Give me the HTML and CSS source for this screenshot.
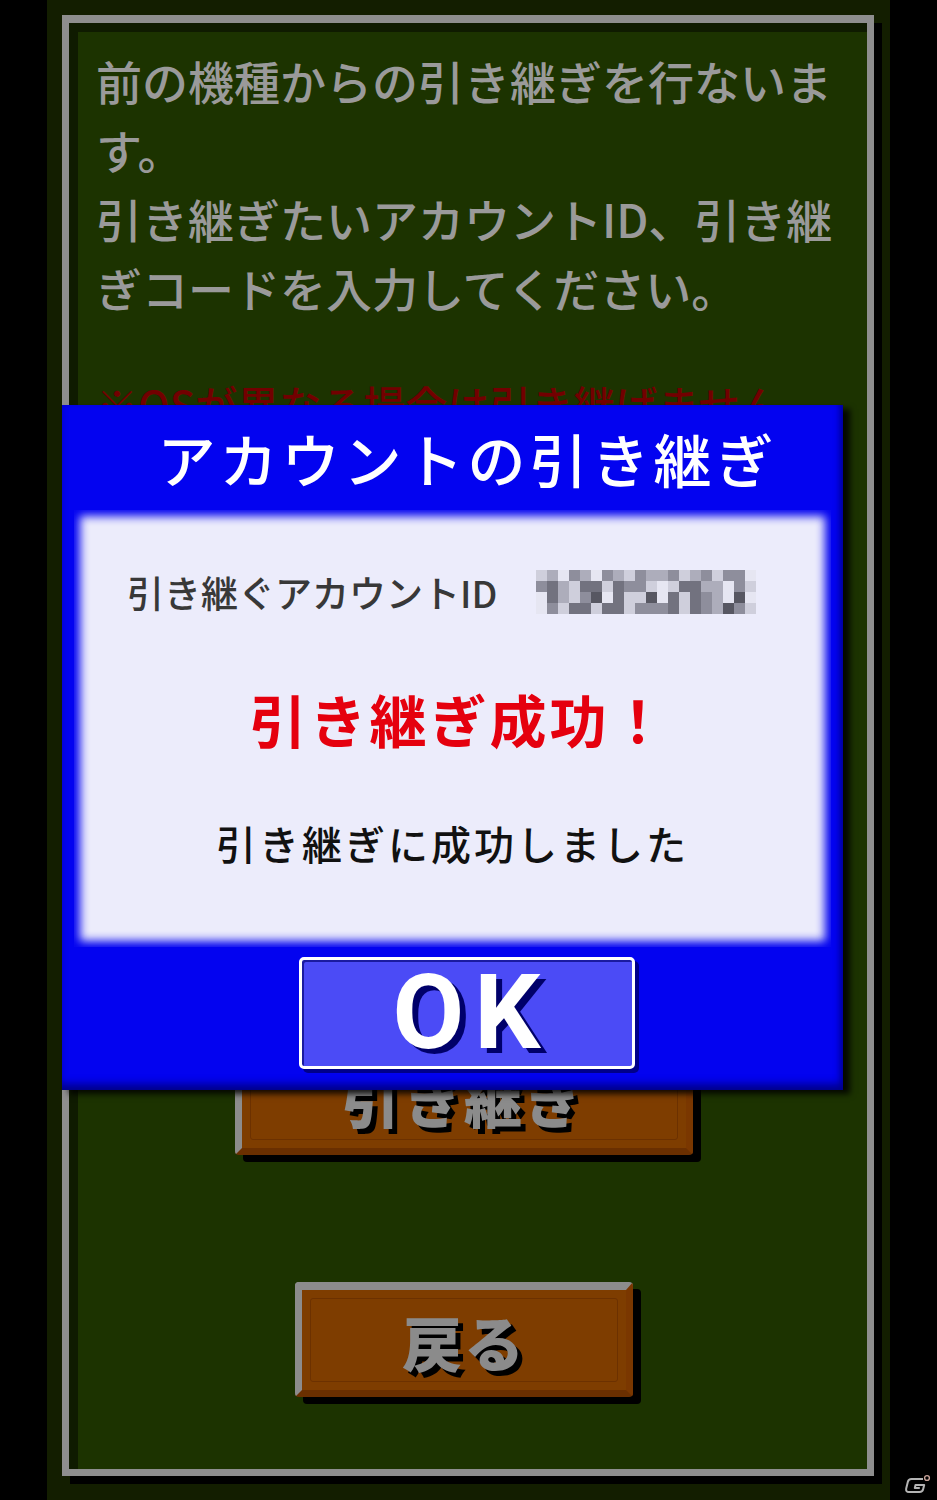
FILE: index.html
```html
<!DOCTYPE html>
<html lang="ja">
  <head>
    <meta charset="utf-8">
    <title>アカウントの引き継ぎ</title>
    <link rel="stylesheet" href="styles.css">
  </head>
  <body>
    <div class="screen">
      <div class="frame">
        <p class="intro">前の機種からの引き継ぎを行ないま<br>す。<br>引き継ぎたいアカウントID、引き継<br>ぎコードを入力してください。</p>
        <p class="warn">※OSが異なる場合は引き継げません。</p>
        <div class="fields"></div>
        <div class="btn btn-transfer"><span>引き継ぎ</span></div>
        <div class="btn btn-back"><span>戻る</span></div>
      </div>
    </div>

    <div class="dialog">
      <div class="dialog-title">アカウントの引き継ぎ</div>
      <div class="panel">
        <div class="id-row">
          <span class="id-label">引き継ぐアカウントID</span>
          <div class="mosaic">
            <i class="s1"></i><i class="s2"></i><i class="s0"></i><i class="s3"></i><i class="s2"></i><i class="s0"></i><i class="s3"></i><i class="s2"></i><i class="s1"></i><i class="s3"></i><i class="s2"></i><i class="s2"></i><i class="s3"></i><i class="s1"></i><i class="s2"></i><i class="s3"></i><i class="s1"></i><i class="s3"></i><i class="s3"></i><i class="s0"></i>
            <i class="s3"></i><i class="s4"></i><i class="s2"></i><i class="s1"></i><i class="s4"></i><i class="s4"></i><i class="s1"></i><i class="s4"></i><i class="s3"></i><i class="s3"></i><i class="s1"></i><i class="s0"></i><i class="s1"></i><i class="s4"></i><i class="s4"></i><i class="s2"></i><i class="s2"></i><i class="s0"></i><i class="s3"></i><i class="s1"></i>
            <i class="s0"></i><i class="s4"></i><i class="s2"></i><i class="s1"></i><i class="s3"></i><i class="s5"></i><i class="s0"></i><i class="s4"></i><i class="s1"></i><i class="s1"></i><i class="s5"></i><i class="s0"></i><i class="s4"></i><i class="s1"></i><i class="s4"></i><i class="s3"></i><i class="s2"></i><i class="s0"></i><i class="s5"></i><i class="s0"></i>
            <i class="s0"></i><i class="s3"></i><i class="s1"></i><i class="s4"></i><i class="s4"></i><i class="s1"></i><i class="s4"></i><i class="s4"></i><i class="s1"></i><i class="s3"></i><i class="s3"></i><i class="s3"></i><i class="s4"></i><i class="s1"></i><i class="s4"></i><i class="s3"></i><i class="s2"></i><i class="s5"></i><i class="s3"></i><i class="s1"></i>
          </div>
        </div>
        <div class="result-title">引き継ぎ成功！</div>
        <div class="result-msg">引き継ぎに成功しました</div>
      </div>
      <div class="dialog-foot">
        <div class="ok">OK</div>
      </div>
    </div>

    <svg class="logo" width="28" height="22" viewBox="0 0 28 22">
      <path d="M20 5 H8.5 Q5.5 5 4.8 8 L3.2 14.5 Q2.5 18 6 18 H16.5 Q19.5 18 20.2 15 L21.2 11 H12.5 L11.8 14 H16.8" fill="none" stroke="#b4b4b4" stroke-width="2" stroke-linejoin="round"/>
      <circle cx="24" cy="4" r="2.4" fill="none" stroke="#c9a49a" stroke-width="1.4"/>
    </svg>
  </body>
</html>
```

FILE: styles.css
```css
body {
  margin: 0;
  background: #000;
  font-family: "Noto Sans CJK JP", sans-serif;
  position: relative;
  height: 1500px;
  overflow: hidden;
}

.screen {
  width: 843px;
  height: 1500px;
  margin-left: 47px;
  background: #131e00;
  overflow: hidden;
}

.frame {
  width: 812px;
  height: 1461px;
  box-sizing: border-box;
  margin: 15px 0 0 15px;
  border: 7px solid #8e8e8e;
  border-top-width: 8px;
  background: #1c3300;
  box-shadow: 8px 8px 0 #000, inset 9px 9px 0 #0f1b00;
  padding: 23px 0 0 27px;
  display: flex;
  flex-direction: column;
}

.intro {
  margin: 0;
  font-size: 46px;
  font-weight: 500;
  line-height: 69px;
  color: #9a9a9a;
  white-space: nowrap;
}

.warn {
  margin: 47px 0 0;
  font-size: 42px;
  font-weight: 500;
  line-height: 69px;
  color: #720000;
  white-space: nowrap;
}

.fields {
  height: 602px;
}

/* bevelled brown buttons */
.btn {
  box-sizing: border-box;
  height: 115px;
  border-style: solid;
  border-width: 8px 7px 7px 7px;
  border-color: #8c8c8c #7a3700 #6a2f00 #8c8c8c;
  border-radius: 4px;
  background: #7e3d00;
  box-shadow: 8px 7px 0 #000;
  padding: 8px;
}

.btn span {
  display: flex;
  height: 100%;
  box-sizing: border-box;
  border: 1px solid #6c3100;
  border-radius: 3px;
  align-items: center;
  justify-content: center;
  font-weight: 900;
  color: #8b8b8b;
  text-shadow: 5px 5px 0 #000;
}

.btn-transfer {
  width: 458px;
  margin-left: 139px;
}

.btn-transfer span {
  font-size: 58px;
  letter-spacing: 3px;
}

.btn-back {
  width: 338px;
  margin: 127px 0 0 199px;
}

.btn-back span {
  font-size: 60px;
  letter-spacing: 2px;
}

/* dialog */
.dialog {
  position: absolute;
  left: 62px;
  top: 405px;
  width: 781px;
  height: 685px;
  background: #0303f0;
  box-shadow: 7px 4px 6px rgba(0, 0, 0, .85), inset 0 -9px 8px -3px #00008a, inset -6px 0 6px -3px #00009a;
  display: flex;
  flex-direction: column;
}

.dialog-title {
  height: 105px;
  display: flex;
  align-items: center;
  justify-content: center;
  padding-left: 30px;
  color: #fff;
  font-size: 58px;
  font-weight: 500;
  letter-spacing: 4px;
}

.panel {
  margin: 0 12px;
  height: 437px;
  box-sizing: border-box;
  background: #ececfb;
  box-shadow: inset 0 0 10px 6px #0303f0;
  padding-top: 60px;
}

.id-row {
  display: flex;
  align-items: center;
  height: 44px;
  padding-left: 53px;
}

.id-label {
  width: 409px;
  font-size: 37px;
  font-weight: 500;
  letter-spacing: 0;
  color: #383838;
  white-space: nowrap;
}

.mosaic {
  display: grid;
  grid-template-columns: repeat(20, 11px);
  grid-auto-rows: 11px;
  filter: blur(.6px);
}

.s0 { background: #e6e6f2; }
.s1 { background: #cfcfdc; }
.s2 { background: #adadbb; }
.s3 { background: #8e8e9c; }
.s4 { background: #72727f; }
.s5 { background: #575762; }

.result-title {
  margin-top: 72px;
  padding-left: 14px;
  text-align: center;
  font-size: 57px;
  line-height: 64px;
  font-weight: bold;
  letter-spacing: 3px;
  color: #e5000e;
}

.result-msg {
  margin-top: 68px;
  text-align: center;
  font-size: 40px;
  font-weight: 500;
  line-height: 50px;
  letter-spacing: 3px;
  color: #111;
}

.dialog-foot {
  flex: 1;
  display: flex;
  justify-content: center;
  align-items: flex-start;
  padding: 10px 0 0 28px;
}

.ok {
  width: 336px;
  height: 112px;
  box-sizing: border-box;
  border: 3px solid #fff;
  border-radius: 5px;
  background: #4b4bf6;
  box-shadow: inset 2px 2px 0 #1a1aa0, 4px 4px 0 #00008a;
  display: flex;
  align-items: center;
  justify-content: center;
  font-family: Roboto, sans-serif;
  font-weight: bold;
  font-size: 104px;
  letter-spacing: 10px;
  padding-left: 10px;
  color: #fff;
  text-shadow: 6px 5px 0 #00006a;
  line-height: 1;
}

.logo {
  position: absolute;
  left: 903px;
  top: 1474px;
}
```
